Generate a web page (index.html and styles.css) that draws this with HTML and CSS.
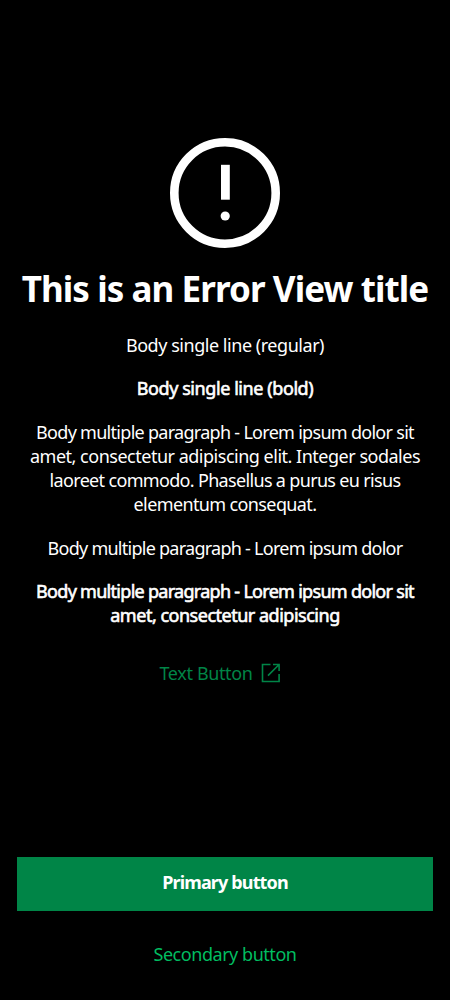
FILE: index.html
```html
<!DOCTYPE html>
<html lang="en">
<head>
<meta charset="utf-8">
<title>Error View</title>
<link rel="stylesheet" href="styles.css">
</head>
<body>
<main class="error-view">
  <section class="content">
    <svg class="error-icon" viewBox="0 0 110 110" aria-hidden="true">
      <circle cx="55" cy="55" r="50.7" fill="none" stroke="#fff" stroke-width="8.6"/>
      <path d="M51 26.8h8.8v34.9H51z" fill="#fff"/>
      <circle cx="55.2" cy="78" r="4.6" fill="#fff"/>
    </svg>
    <h1 class="title">This is an Error View title</h1>
    <div class="body">
      <p class="line-regular">Body single line (regular)</p>
      <p class="strong line-bold">Body single line (bold)</p>
      <p><span class="row r1">Body multiple paragraph - Lorem ipsum dolor sit</span> <span class="row r2">amet, consectetur adipiscing elit. Integer sodales</span> <span class="row r3">laoreet commodo. Phasellus a purus eu risus</span> <span class="row r4">elementum consequat.</span></p>
      <p class="r5">Body multiple paragraph - Lorem ipsum dolor</p>
      <p class="strong"><span class="row r6">Body multiple paragraph - Lorem ipsum dolor sit</span> <span class="row r7">amet, consectetur adipiscing</span></p>
    </div>
    <button class="text-button">
      <span>Text Button</span>
      <svg class="link-icon" viewBox="0 0 20 20" fill="none" stroke="currentColor" stroke-width="1.6" aria-hidden="true">
        <path d="M9.5 1.5H1.5v17h16.6V11M12 1.5h6.1V8M18.1 1.5L7 12.6"/>
      </svg>
    </button>
  </section>
  <footer class="actions">
    <button class="primary">Primary button</button>
    <button class="secondary">Secondary button</button>
  </footer>
</main>
</body>
</html>
```
FILE: styles.css
```css
* { box-sizing: border-box; margin: 0; }
body { background: #000; color: #fff; font: 18px/24.1px "Noto Sans", sans-serif; }
.error-view { height: 1000px; display: flex; flex-direction: column; justify-content: space-between; padding-top: 138px; }
.content { display: flex; flex-direction: column; align-items: center; text-align: center; }
.error-icon { width: 110px; height: 110px; }
.title { margin-top: 18.6px; font-size: 35px; line-height: 44px; font-weight: 700; letter-spacing: -0.92px; white-space: nowrap; }
.body { margin-top: 22.5px; display: flex; flex-direction: column; gap: 19.3px; }
.row { display: block; white-space: nowrap; }
.strong { -webkit-text-stroke: 0.6px currentColor; }
.line-regular { letter-spacing: -0.46px; }
.line-bold { letter-spacing: -0.42px; }
.r1 { letter-spacing: -0.71px; }
.r2 { letter-spacing: -0.49px; }
.r3 { letter-spacing: -0.67px; }
.r4 { letter-spacing: -0.62px; }
.r5 { letter-spacing: -0.74px; }
.r6 { letter-spacing: -0.71px; }
.r7 { letter-spacing: -0.49px; }
button { border: 0; padding: 0; background: none; color: inherit; font: inherit; }
.text-button { margin: 33.5px 10px 0 0; display: flex; align-items: center; gap: 8px; color: #008547; letter-spacing: -0.36px; }
.link-icon { width: 20px; height: 20px; }
.actions { padding: 0 17.4px 34px; display: flex; flex-direction: column; gap: 31px; }
.primary { height: 54px; padding-bottom: 4px; background: #008547; color: #fff; font-weight: 700; letter-spacing: -0.85px; }
.secondary { color: #00bd61; letter-spacing: -0.46px; }
```
